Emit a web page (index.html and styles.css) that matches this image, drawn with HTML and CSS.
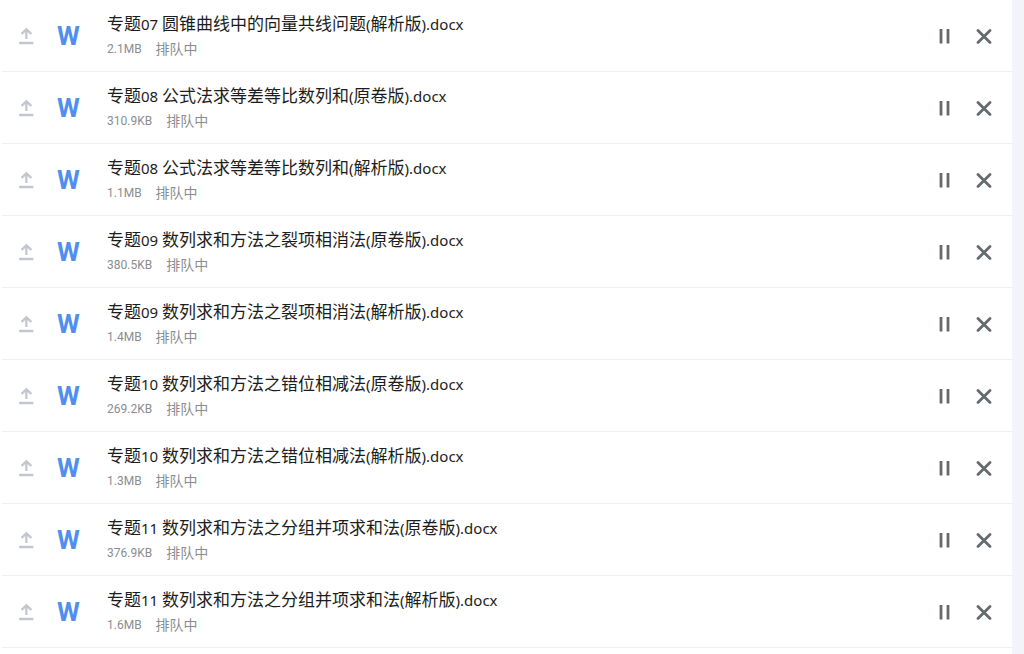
FILE: index.html
```
<!DOCTYPE html>
<html lang="zh-CN">
<head>
<meta charset="utf-8">
<title>上传列表</title>
<link rel="stylesheet" href="styles.css">
</head>
<body>
<svg class="sprite" aria-hidden="true">
  <symbol id="upload" viewBox="0 0 16 18"><path d="M1.2 16h14.2M8.4 12V2.5M3.4 7l5-4.7 5 4.7" fill="none" stroke="currentColor" stroke-width="2.3"/></symbol>
  <symbol id="pause" viewBox="0 0 16 16"><path d="M5 2.4v11.8M12 2.4v11.8" fill="none" stroke="currentColor" stroke-width="2.8" stroke-linecap="square"/></symbol>
  <symbol id="close" viewBox="0 0 16 16"><path d="M2 2.5l12 12M14 2.5l-12 12" fill="none" stroke="currentColor" stroke-width="2.8" stroke-linecap="round"/></symbol>
</svg>
<ul class="uploads" id="uploads"></ul>
<script src="app.js"></script>
</body>
</html>
```
FILE: styles.css
```
* { box-sizing: border-box; }

body {
  margin: 0;
  min-height: 100vh;
  padding: 0 12px 0 2px;
  background: linear-gradient(to left, #f3f4fa 12px, #fff 12px);
  font-family: "Noto Sans", "Noto Sans CJK SC", sans-serif;
  overflow: hidden;
}

.sprite { display: none; }

.uploads {
  margin: 0;
  padding: 0;
  list-style: none;
}

.row {
  display: flex;
  align-items: center;
  height: 72px;
  padding: 0 20px 0 16px;
  border-bottom: 1px solid #eeeff3;
}

.upload-icon {
  width: 16px;
  height: 18px;
  color: #c3c6cf;
}

.file-type {
  width: 24px;
  margin: 0 26px 0 23px;
  color: #4f90ee;
  font: bold 26px/30px Roboto, sans-serif;
}

.info {
  flex: 1;
  min-width: 0;
  padding-bottom: 1px;
}

.name {
  margin: 0;
  color: #1c1d20;
  font-size: 17px;
  font-weight: 400;
  line-height: 28px;
  white-space: nowrap;
}

.latin { font-size: 15px; }

.meta {
  display: flex;
  gap: 14px;
  color: #8b8c90;
  font-size: 14px;
  line-height: 22px;
}

.size {
  font-family: Roboto, sans-serif;
  font-size: 12px;
}

.actions {
  display: flex;
  gap: 24px;
}

.action {
  width: 16px;
  height: 16px;
  padding: 0;
  border: 0;
  background: none;
  color: #666a70;
  cursor: pointer;
}

.action svg {
  display: block;
  width: 16px;
  height: 16px;
}
```
FILE: app.js
```
const files = [
  ["专题", "07 ", "圆锥曲线中的向量共线问题", "解析版", "2.1MB"],
  ["专题", "08 ", "公式法求等差等比数列和", "原卷版", "310.9KB"],
  ["专题", "08 ", "公式法求等差等比数列和", "解析版", "1.1MB"],
  ["专题", "09 ", "数列求和方法之裂项相消法", "原卷版", "380.5KB"],
  ["专题", "09 ", "数列求和方法之裂项相消法", "解析版", "1.4MB"],
  ["专题", "10 ", "数列求和方法之错位相减法", "原卷版", "269.2KB"],
  ["专题", "10 ", "数列求和方法之错位相减法", "解析版", "1.3MB"],
  ["专题", "11 ", "数列求和方法之分组并项求和法", "原卷版", "376.9KB"],
  ["专题", "11 ", "数列求和方法之分组并项求和法", "解析版", "1.6MB"]
];

const latin = text => `<span class="latin">${text}</span>`;

document.getElementById("uploads").innerHTML = files.map(([series, number, topic, edition, size]) => `
  <li class="row">
    <svg class="upload-icon" aria-hidden="true"><use href="#upload"/></svg>
    <span class="file-type">W</span>
    <div class="info">
      <h2 class="name">${series}${latin(number)}${topic}${latin("(")}${edition}${latin(").docx")}</h2>
      <div class="meta"><span class="size">${size}</span><span>排队中</span></div>
    </div>
    <div class="actions">
      <button class="action" type="button" aria-label="暂停"><svg><use href="#pause"/></svg></button>
      <button class="action" type="button" aria-label="取消"><svg><use href="#close"/></svg></button>
    </div>
  </li>`).join("");
```
